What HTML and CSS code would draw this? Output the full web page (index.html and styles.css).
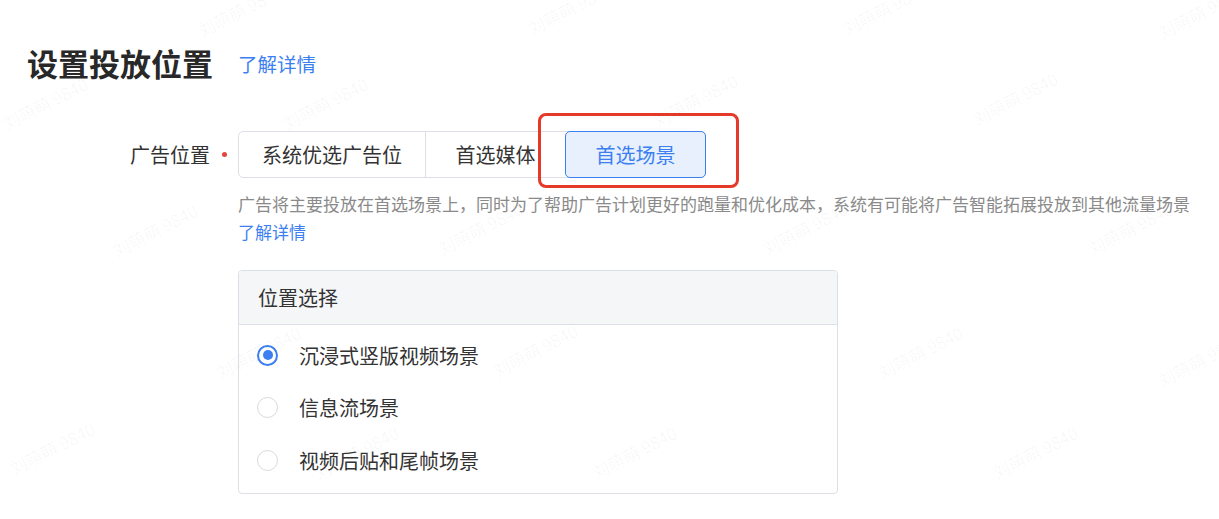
FILE: index.html
```html
<html lang="zh-CN">

<head>
    <meta charset="UTF-8">
    <meta name="viewport" content="width=device-width, initial-scale=1.0">
    <title>设置投放位置</title>

    <link rel="stylesheet" href="styles.css">
</head>

<body>

    <div class="page">
        <div class="title-row">
            <h1>设置投放位置</h1>
            <a class="link" href="#">了解详情</a>
        </div>

        <div class="form-item">
            <div class="label">广告位置<span class="dot"></span></div>
            <div class="field">
                <div class="segments">
                    <div class="seg seg-first">系统优选广告位</div>
                    <div class="seg">首选媒体</div>
                    <div class="seg active">首选场景<span class="mark"></span></div>
                </div>

                <p class="desc">广告将主要投放在首选场景上，同时为了帮助广告计划更好的跑量和优化成本，系统有可能将广告智能拓展投放到其他流量场景<br><a class="link small" href="#">了解详情</a></p>

                <div class="panel">
                    <div class="panel-head">位置选择</div>
                    <div class="panel-body">
                        <label class="radio checked"><span class="circle"></span>沉浸式竖版视频场景</label>
                        <label class="radio"><span class="circle"></span>信息流场景</label>
                        <label class="radio"><span class="circle"></span>视频后贴和尾帧场景</label>
                    </div>
                </div>
            </div>
        </div>
    </div>

    <!-- watermark layer -->
    <div class="marks">
        <span style="left: 240px; top: 10px;">刘萌萌 9840</span>
        <span style="left: 570px; top: 8px;">刘萌萌 9840</span>
        <span style="left: 885px; top: 8px;">刘萌萌 9840</span>
        <span style="left: 1200px; top: 12px;">刘萌萌 9840</span>
        <span style="left: 45px; top: 103px;">刘萌萌 9840</span>
        <span style="left: 325px; top: 103px;">刘萌萌 9840</span>
        <span style="left: 695px; top: 100px;">刘萌萌 9840</span>
        <span style="left: 1015px; top: 98px;">刘萌萌 9840</span>
        <span style="left: 155px; top: 230px;">刘萌萌 9840</span>
        <span style="left: 480px; top: 228px;">刘萌萌 9840</span>
        <span style="left: 805px; top: 228px;">刘萌萌 9840</span>
        <span style="left: 1130px; top: 228px;">刘萌萌 9840</span>
        <span style="left: 258px; top: 352px;">刘萌萌 9840</span>
        <span style="left: 535px; top: 350px;">刘萌萌 9840</span>
        <span style="left: 920px; top: 352px;">刘萌萌 9840</span>
        <span style="left: 1200px; top: 360px;">刘萌萌 9840</span>
        <span style="left: 52px; top: 448px;">刘萌萌 9840</span>
        <span style="left: 356px; top: 452px;">刘萌萌 9840</span>
        <span style="left: 634px; top: 452px;">刘萌萌 9840</span>
        <span style="left: 1035px; top: 452px;">刘萌萌 9840</span>
    </div>

</body>

</html>
```

FILE: styles.css
```css
body {
    background: rgb(255, 255, 255);
    margin: 0px;
    padding: 0px;
    font-family: "Noto Sans CJK SC", "Noto Sans", sans-serif;
    color: rgb(51, 51, 51);
    overflow: hidden;
}
.page {
    padding: 43px 0 0 27px;
}
.title-row {
    display: flex;
    align-items: center;
    height: 40px;
}
h1 {
    margin: 0;
    font-size: 31px;
    line-height: 40px;
    font-weight: 700;
    color: rgb(40, 40, 40);
}
.link {
    color: rgb(59, 127, 240);
    text-decoration: none;
    font-size: 19.5px;
    margin-left: 25px;
}
.link.small {
    font-size: 17px;
    margin-left: 0;
}
.form-item {
    display: grid;
    grid-template-columns: 211px 1fr;
    margin-top: 48px;
}
.label {
    display: flex;
    justify-content: flex-end;
    align-items: center;
    height: 47px;
    padding-right: 11px;
    font-size: 20px;
}
.dot {
    width: 5px;
    height: 5px;
    border-radius: 50%;
    background: rgb(230, 70, 60);
    margin-left: 12px;
}
.segments {
    display: inline-flex;
    height: 47px;
    border: 1px solid rgb(220, 223, 230);
    border-radius: 5px;
    box-sizing: border-box;
}
.seg {
    display: flex;
    align-items: center;
    padding: 0 29.5px;
    font-size: 20px;
    border-left: 1px solid rgb(220, 223, 230);
    position: relative;
}
.seg-first {
    border-left: 0;
    padding: 0 23px;
}
.seg.active {
    margin: -1px -1px -1px 0;
    border: 1px solid rgb(59, 127, 240);
    border-radius: 5px;
    background: rgb(232, 240, 254);
    color: rgb(59, 127, 240);
}
.mark {
    position: absolute;
    left: -28px;
    top: -19px;
    width: 201px;
    height: 75px;
    box-sizing: border-box;
    border: 3px solid rgb(229, 57, 42);
    border-radius: 8px;
}
.desc {
    margin: 12px 0 0 0;
    font-size: 17px;
    line-height: 28px;
    color: rgb(138, 138, 138);
    white-space: nowrap;
}
.panel {
    margin-top: 24px;
    width: 600px;
    height: 224px;
    box-sizing: border-box;
    border: 1px solid rgb(220, 223, 230);
    border-radius: 4px;
    overflow: hidden;
}
.panel-head {
    height: 53px;
    display: flex;
    align-items: center;
    padding-left: 19px;
    font-size: 20px;
    background: rgb(245, 246, 248);
    border-bottom: 1px solid rgb(220, 223, 230);
}
.panel-body {
    display: flex;
    flex-direction: column;
    padding: 4px 0 0 18px;
}
.radio {
    display: flex;
    align-items: center;
    height: 52.5px;
    font-size: 20px;
    gap: 21px;
}
.circle {
    width: 21px;
    height: 21px;
    box-sizing: border-box;
    border-radius: 50%;
    border: 1px solid rgb(217, 217, 217);
    background: white;
    display: flex;
    align-items: center;
    justify-content: center;
}
.checked .circle {
    border: 2px solid rgb(59, 127, 240);
}
.checked .circle::after {
    content: "";
    width: 10px;
    height: 10px;
    border-radius: 50%;
    background: rgb(59, 127, 240);
}
.marks {
    position: absolute;
    inset: 0;
    pointer-events: none;
    overflow: hidden;
}
.marks span {
    position: absolute;
    transform: translate(-50%, -50%) rotate(-27deg);
    font-size: 17px;
    white-space: nowrap;
    color: rgba(0, 0, 0, 0.035);
}
```
